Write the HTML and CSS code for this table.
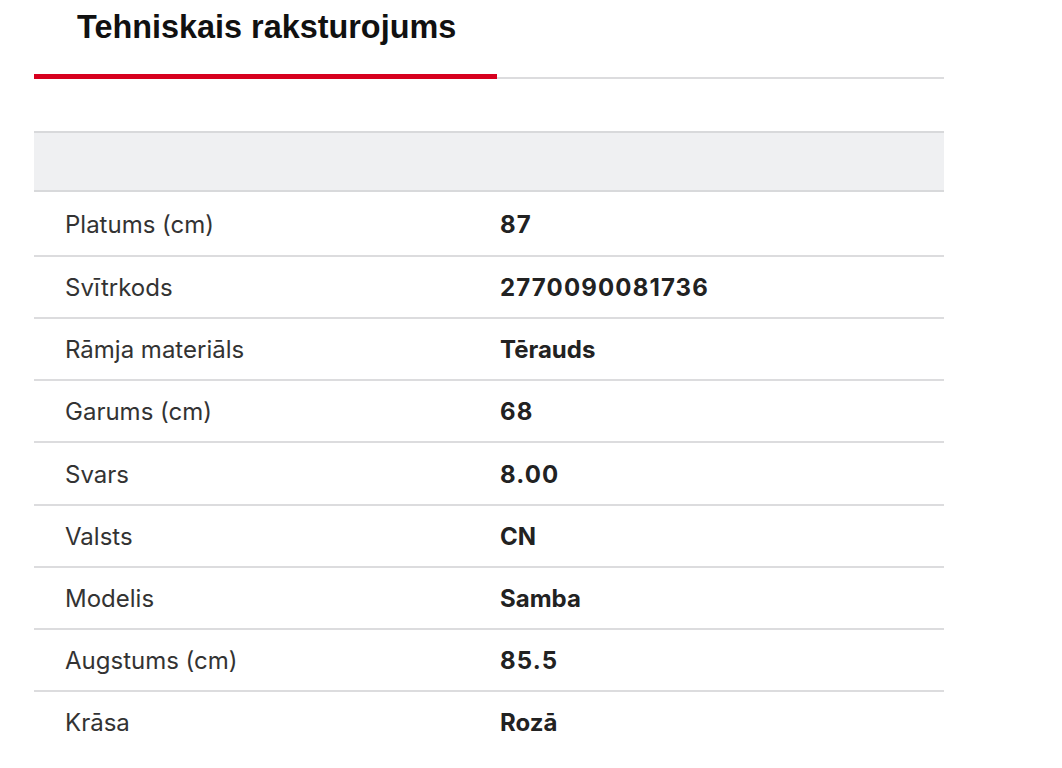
FILE: index.html
```html
<!DOCTYPE html>
<html lang="lv">
<head>
<meta charset="utf-8">
<title>Tehniskais raksturojums</title>
<link rel="stylesheet" href="styles.css">
</head>
<body>
<div class="panel">
  <div class="tabs">
    <div class="tab active">Tehniskais raksturojums</div>
  </div>
  <div class="specs">
    <div class="specs-head"></div>
    <div class="row"><div class="label">Platums (cm)</div><div class="value num">87</div></div>
    <div class="row"><div class="label">Svītrkods</div><div class="value num">2770090081736</div></div>
    <div class="row"><div class="label">Rāmja materiāls</div><div class="value">Tērauds</div></div>
    <div class="row"><div class="label">Garums (cm)</div><div class="value num">68</div></div>
    <div class="row"><div class="label">Svars</div><div class="value num">8.00</div></div>
    <div class="row"><div class="label">Valsts</div><div class="value">CN</div></div>
    <div class="row"><div class="label">Modelis</div><div class="value">Samba</div></div>
    <div class="row"><div class="label">Augstums (cm)</div><div class="value num">85.5</div></div>
    <div class="row last"><div class="label">Krāsa</div><div class="value">Rozā</div></div>
  </div>
</div>
</body>
</html>
```
FILE: styles.css
```css
html, body {
  margin: 0;
  padding: 0;
  background: #ffffff;
}
body {
  font-family: Inter, "Liberation Sans", Arial, sans-serif;
  color: #222;
}
.panel {
  width: 910px;
  margin-left: 34px;
}
.tabs {
  display: flex;
  border-bottom: 2px solid #dcdcde;
  height: 79px;
  box-sizing: border-box;
}
.tab {
  width: 463px;
  box-sizing: border-box;
  padding: 9px 0 0 43px;
  font-family: "Liberation Sans", Arial, sans-serif;
  font-weight: 700;
  font-size: 32.4px;
  line-height: 36px;
  color: #111;
}
.tab.active {
  border-bottom: 5px solid #d7001e;
  margin-bottom: -2px;
}
.specs {
  margin-top: 52px;
  border-top: 2px solid #d8d9db;
}
.specs-head {
  height: 57px;
  background: #eff0f2;
  border-bottom: 2px solid #d8d9db;
}
.row {
  display: grid;
  grid-template-columns: 466px 1fr;
  align-items: center;
  height: 60.17px;
  border-bottom: 2px solid #dcdcde;
}
.specs-head + .row {
  height: 63px;
}
.row.last {
  border-bottom: none;
}
.label {
  padding-left: 31px;
  padding-top: 1px;
  font-size: 24px;
  color: #333;
}
.value {
  padding-top: 1px;
  font-size: 24px;
  font-weight: 700;
  color: #222;
}
.value.num {
  letter-spacing: 1.15px;
}
```
